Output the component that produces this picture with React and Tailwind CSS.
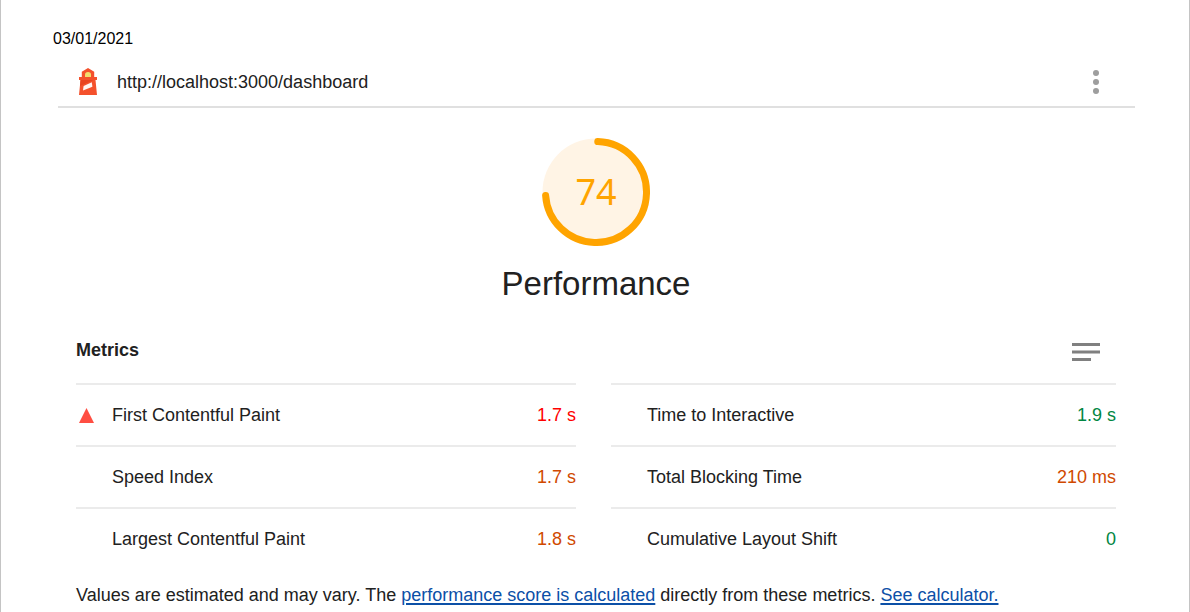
const columns = [
  [
    { label: 'First Contentful Paint', value: '1.7 s', color: 'text-[#ff0000]', failing: true },
    { label: 'Speed Index', value: '1.7 s', color: 'text-[#d04900]' },
    { label: 'Largest Contentful Paint', value: '1.8 s', color: 'text-[#d04900]' },
  ],
  [
    { label: 'Time to Interactive', value: '1.9 s', color: 'text-[#018642]' },
    { label: 'Total Blocking Time', value: '210 ms', color: 'text-[#d04900]' },
    { label: 'Cumulative Layout Shift', value: '0', color: 'text-[#018642]' },
  ],
];

function LighthouseLogo() {
  return (
    <svg viewBox="0 0 18 27" className="h-[27px] w-[18px]" aria-hidden="true">
      <path fill="#f4512c" d="M9 0l6.200 3.800V9H18v3h-1.500L18 27H0l1.500-15H0V9h2.800V3.800z" />
      <path fill="#e8431f" d="M1.500 12h13L1 18z" />
      <path fill="#f2de6e" d="M6 9V6.500Q6 4 9 4t3 2.500V9z" />
      <path fill="#fff" fillOpacity=".94" d="M4.600 18l8.200-3.800.600 4.600-9.400 3.800z" />
    </svg>
  );
}

function Gauge({ score }) {
  return (
    <div className="grid size-[108px] place-items-center">
      <svg viewBox="0 0 108 108" className="col-start-1 row-start-1 size-full" aria-hidden="true">
        <circle cx="54" cy="54" r="53.500" fill="#fff4e5" />
        <circle
          cx="54"
          cy="54"
          r="50.500"
          fill="none"
          stroke="#ffa400"
          strokeWidth="7"
          strokeLinecap="round"
          pathLength="360"
          strokeDasharray="264 360"
          transform="rotate(-88 54 54)"
        />
      </svg>
      <span className="col-start-1 row-start-1 font-['Noto_Sans',sans-serif] text-[36px] leading-10 text-[#ffa400]">
        {score}
      </span>
    </div>
  );
}

function Metric({ label, value, color, failing }) {
  return (
    <div className="flex h-[62px] items-center border-t-2 border-[#ebebeb]">
      <dt className="flex flex-1 items-center">
        <span className="w-9 pl-[3px]">
          {failing && (
            <svg viewBox="0 0 15 15" className="size-[15px]" role="img" aria-label="Fail">
              <path fill="#ff4e42" d="M7.500 0L15 15H0z" />
            </svg>
          )}
        </span>
        {label}
      </dt>
      <dd className={color}>{value}</dd>
    </div>
  );
}

export default function App() {
  return (
    <div className="min-h-screen border-x border-[#c4c4c4] bg-white pt-[29px] font-['Liberation_Sans',Arial,sans-serif] text-[18px] leading-6 text-[#212121]">
      <time dateTime="2021-03-01" className="block pl-[52px] text-base leading-5 text-black">
        03/01/2021
      </time>
      <header className="mr-[54px] ml-[57px] flex h-[59px] items-center gap-5 border-b-2 border-[#e0e0e0] pt-2 pr-[27px] pl-[21px]">
        <LighthouseLogo />
        <a href="http://localhost:3000/dashboard" className="flex-1">
          http://localhost:3000/dashboard
        </a>
        <button type="button" aria-label="Tools" className="flex h-8 w-6 items-center justify-center">
          <svg viewBox="0 0 6 24" className="h-6 w-[6px] fill-[#9e9e9e]" aria-hidden="true">
            <circle cx="3" cy="3" r="3" />
            <circle cx="3" cy="12" r="3" />
            <circle cx="3" cy="21" r="3" />
          </svg>
        </button>
      </header>
      <main className="pr-[73px] pl-[75px]">
        <section className="flex flex-col items-center gap-[18px] pt-[30px]">
          <Gauge score={74} />
          <h1 className="text-[33px] leading-10">Performance</h1>
        </section>
        <section>
          <div className="mt-[34px] mb-[21px] flex items-center justify-between pr-4">
            <h2 className="font-bold">Metrics</h2>
            <button type="button" aria-label="Toggle descriptions" className="pt-1">
              <svg viewBox="0 0 28 18" className="block h-[18px] w-7 fill-[#808080]" aria-hidden="true">
                <path d="M0 0h28v3H0zM0 7.500h28v3H0zM0 15h19v3H0z" />
              </svg>
            </button>
          </div>
          <div className="grid grid-cols-[500fr_505fr] gap-x-[35px]">
            {columns.map((metrics, i) => (
              <dl key={i}>
                {metrics.map((metric) => (
                  <Metric key={metric.label} {...metric} />
                ))}
              </dl>
            ))}
          </div>
          <p className="mt-[14px]">
            Values are estimated and may vary. The{' '}
            <a href="#score" className="text-[#0c50a7] underline decoration-2 underline-offset-2">
              performance score is calculated
            </a>{' '}
            directly from these metrics.{' '}
            <a href="#calculator" className="text-[#0c50a7] underline decoration-2 underline-offset-2">
              See calculator.
            </a>
          </p>
        </section>
      </main>
    </div>
  );
}
